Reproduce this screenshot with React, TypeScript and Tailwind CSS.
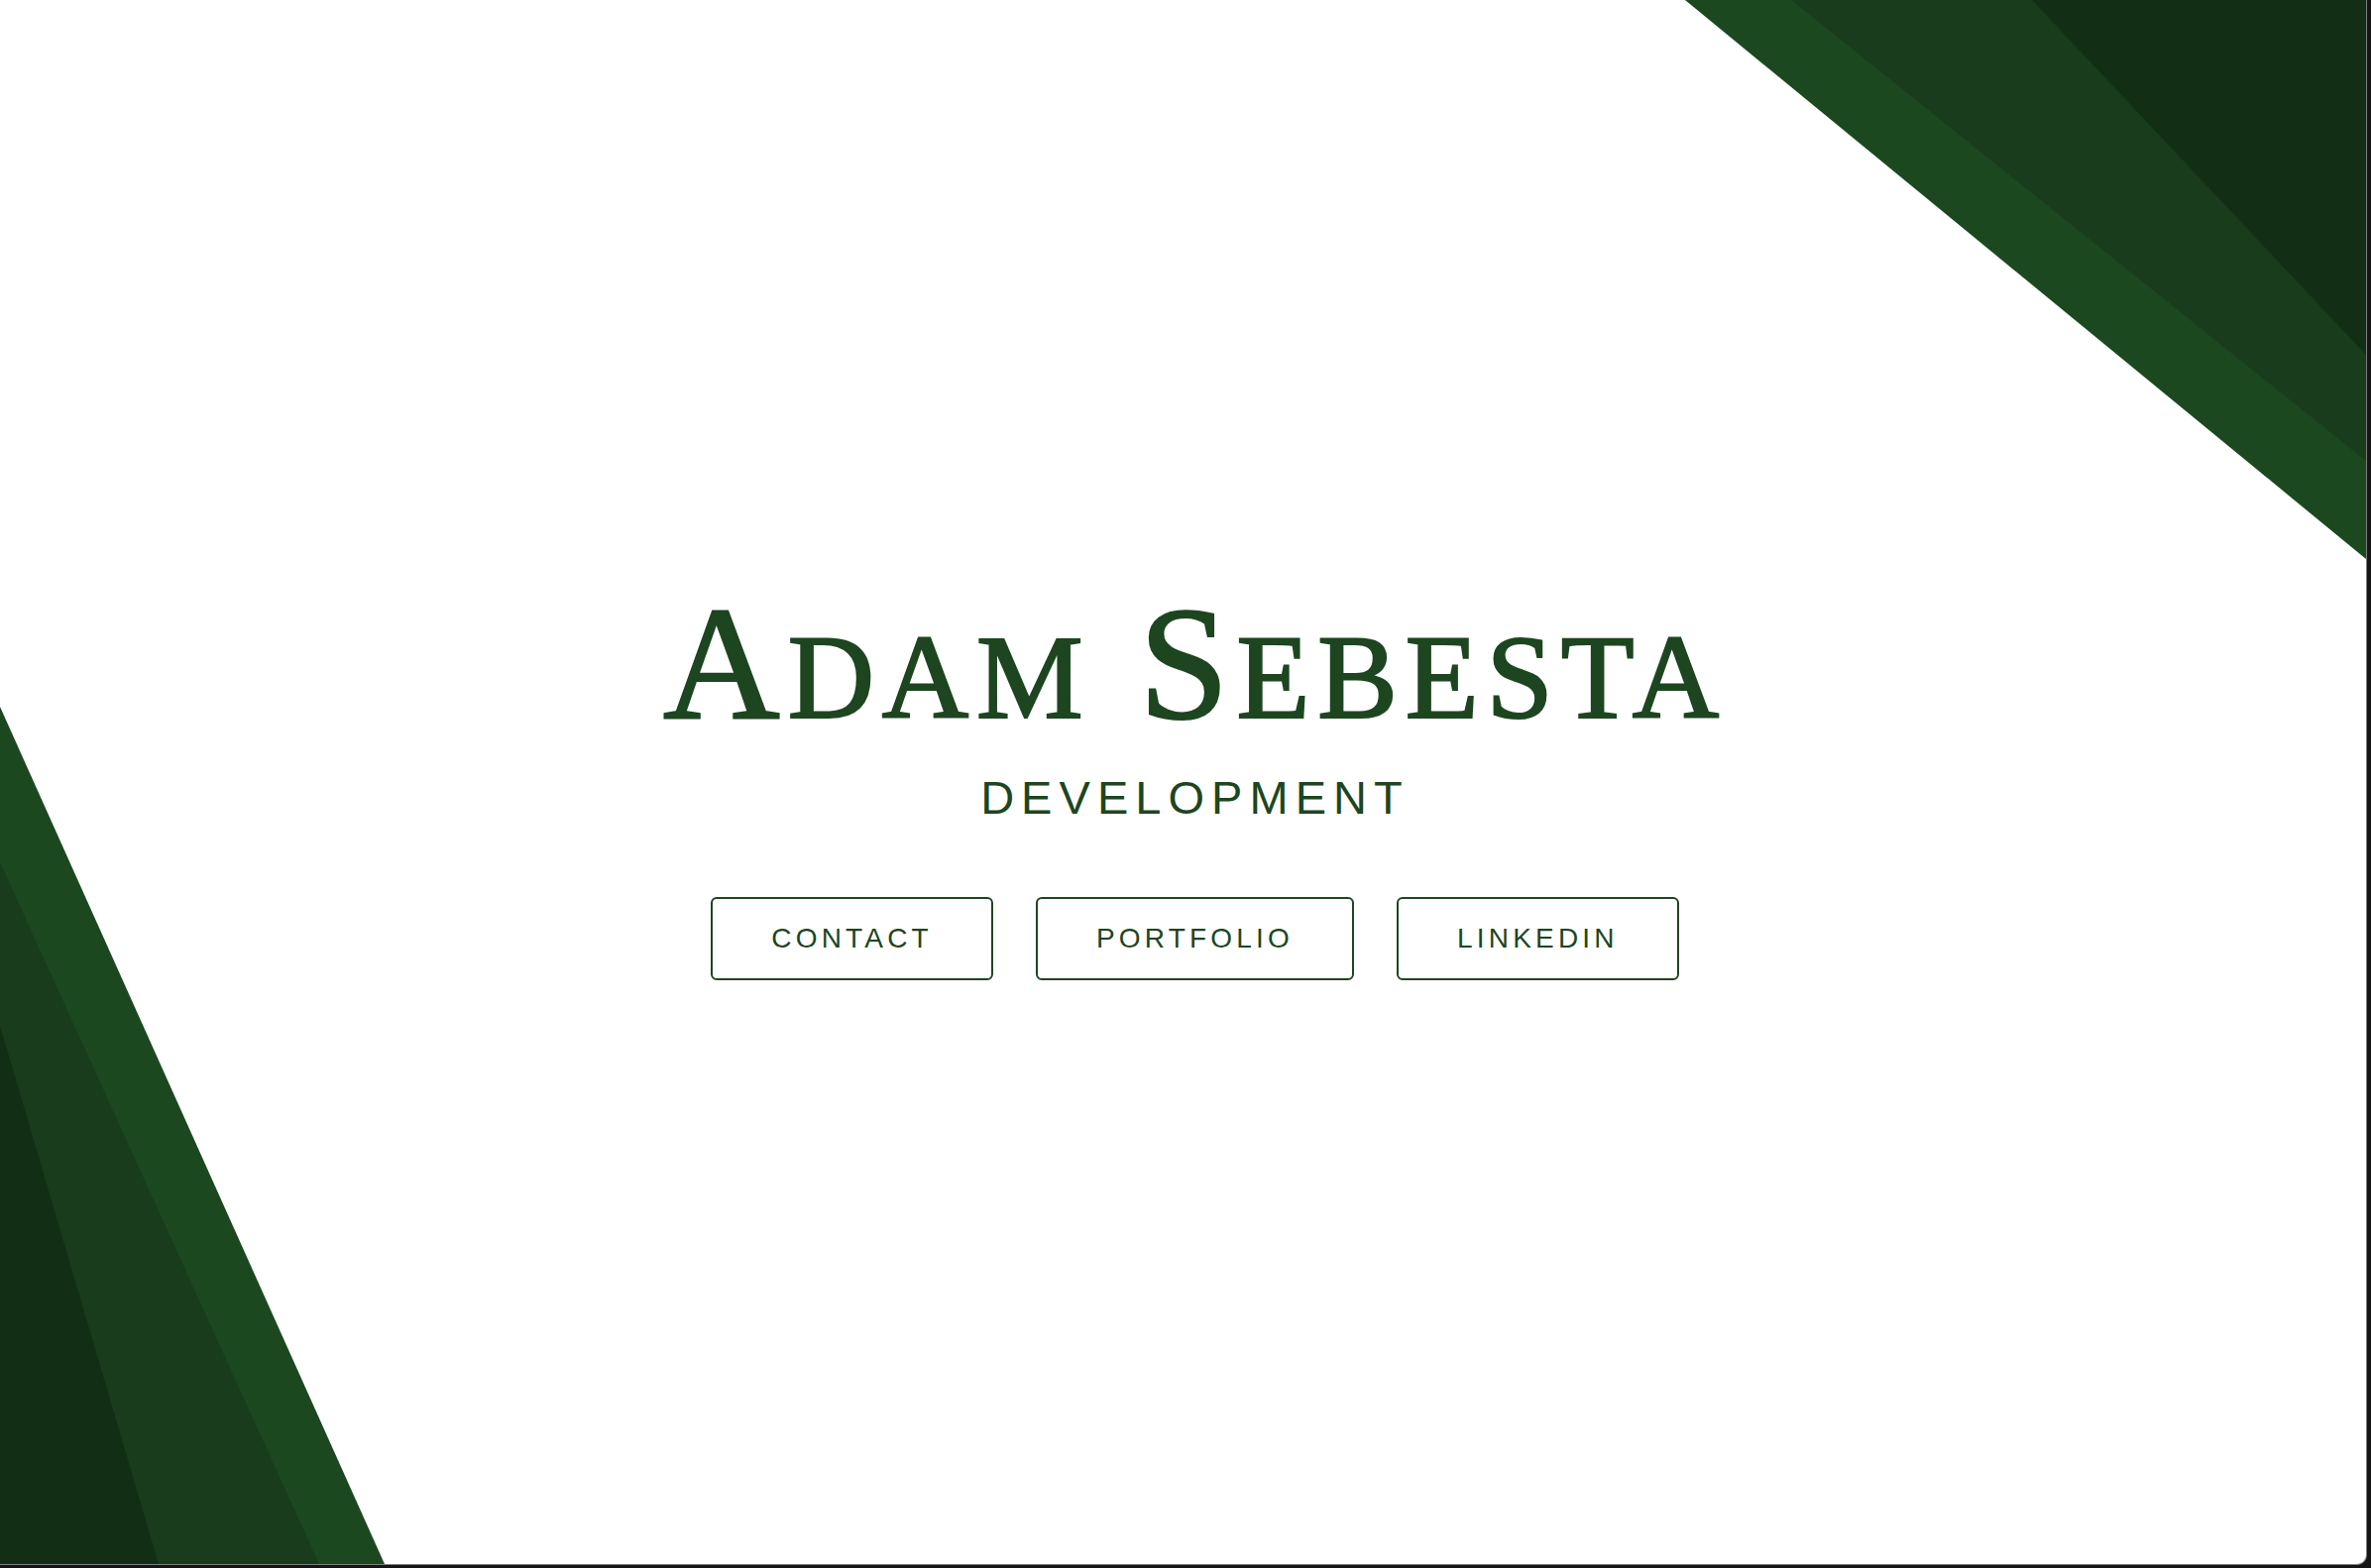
import React from "react";

export default function App() {
  const serif = { fontFamily: '"Liberation Serif", "Times New Roman", serif' };
  const sans = { fontFamily: '"Liberation Sans", Arial, sans-serif' };
  return (
    <div className="w-[2392px] h-[1582px] bg-[#151515] overflow-hidden">
      <div className="relative w-[2388px] h-[1579px] bg-white rounded-br-[10px] overflow-hidden border-r border-b border-[#7d7d7d]">
        <svg
          className="absolute inset-0 w-full h-full"
          viewBox="0 0 2387 1578"
          preserveAspectRatio="none"
        >
          <polygon points="1700,0 2387,564 2387,0" fill="#1c4820" />
          <polygon points="1807,0 2387,465 2387,0" fill="#183c1c" />
          <polygon points="2050,0 2387,358 2387,0" fill="#122f16" />
          <polygon points="0,713 388,1578 0,1578" fill="#1c4820" />
          <polygon points="0,870 322,1578 0,1578" fill="#183c1c" />
          <polygon points="0,1035 160,1578 0,1578" fill="#122f16" />
        </svg>
        <div className="relative flex flex-col items-center pt-[588px] pl-[24px] text-[#1d4620]">
          <h1
            className="text-[163px] leading-none tracking-[0.048em] whitespace-nowrap [-webkit-text-stroke:2.2px_#1d4620]"
            style={serif}
          >
            A<span className="text-[121px]">DAM</span> S
            <span className="text-[121px]">EBESTA</span>
          </h1>
          <div
            className="mt-[30px] text-[47px] leading-none tracking-[0.15em]"
            style={sans}
          >
            DEVELOPMENT
          </div>
          <div className="mt-[77px] flex gap-[43px]" style={sans}>
            {["CONTACT", "PORTFOLIO", "LINKEDIN"].map((t) => (
              <button
                key={t}
                className="h-[84px] px-[59px] flex items-center border-2 border-[#1d4620] rounded-[6px] text-[28px] leading-none tracking-[0.15em] text-[#1d4620] bg-transparent"
              >
                {t}
              </button>
            ))}
          </div>
        </div>
      </div>
    </div>
  );
}
